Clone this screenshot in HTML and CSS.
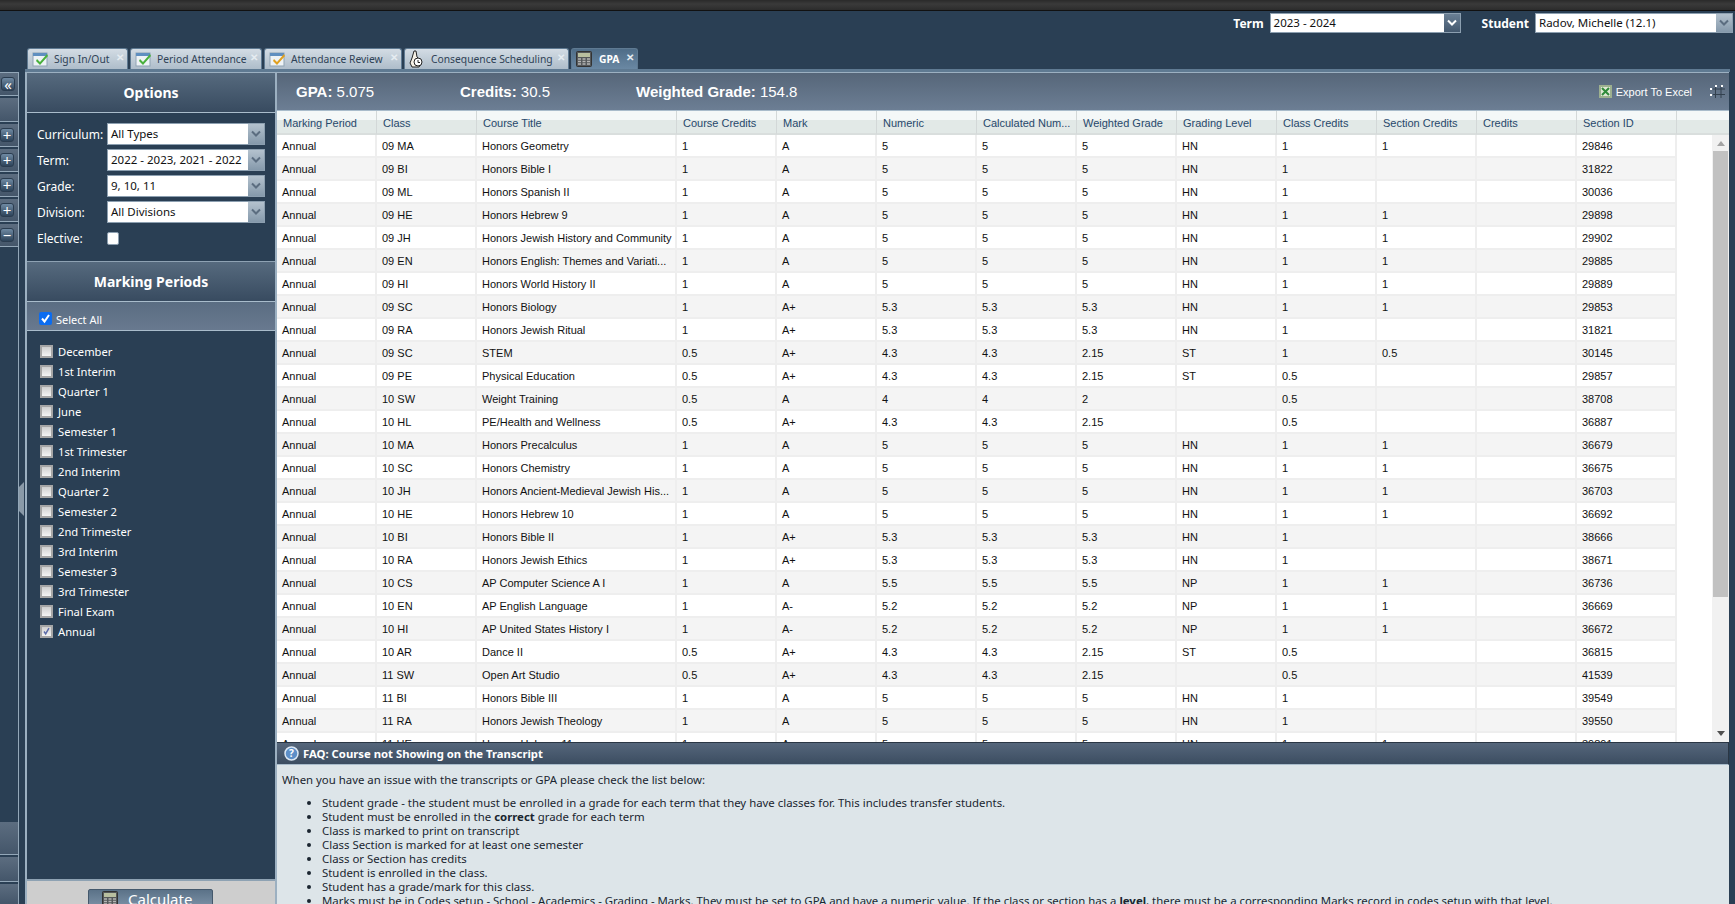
FILE: index.html
```html
<!DOCTYPE html>
<html>
<head>
  <title>GPA</title>
  <link rel="stylesheet" href="styles.css">
</head>
<body>
  <svg class="defs" width="0" height="0">
    <symbol id="cal-green" viewBox="0 0 18 16">
      <rect x="1" y="2" width="14" height="13" fill="#eef3f6" stroke="#8fa3b3"/>
      <rect x="1" y="2" width="14" height="3" fill="#5f8fc0"/>
      <path d="M5 8l3 3 7-8 1 2-8 9-4-4z" fill="#49b03c"/>
    </symbol>
    <symbol id="cal-orange" viewBox="0 0 18 16">
      <rect x="1" y="2" width="14" height="13" fill="#eef3f6" stroke="#8fa3b3"/>
      <rect x="1" y="2" width="14" height="3" fill="#5f8fc0"/>
      <path d="M5 8l3 3 7-8 1 2-8 9-4-4z" fill="#e0a020"/>
    </symbol>
    <symbol id="hand" viewBox="0 0 14 18">
      <path d="M5 1l2 0 1 6 3 3 1 4-2 3-7 0-2-4 2-5z" fill="#f6f1e6" stroke="#222"/>
      <circle cx="9" cy="12" r="4" fill="#fff" stroke="#222"/>
      <path d="M9 10v2.500h2" fill="none" stroke="#222"/>
    </symbol>
    <symbol id="calc" viewBox="0 0 16 16">
      <rect x="0.500" y="0.500" width="15" height="15" rx="1" fill="#55585a" stroke="#333"/>
      <rect x="2" y="2" width="12" height="4" fill="#b9bf9f"/>
      <path d="M2 8h3M6.500 8h3M11 8h3M2 10.500h3M6.500 10.500h3M11 10.500h3M2 13h3M6.500 13h3M11 13h3" stroke="#b5b5b5" stroke-width="1.500"/>
    </symbol>
    <symbol id="excel" viewBox="0 0 13 13">
      <rect width="13" height="13" fill="#9db08f"/>
      <rect x="2" y="2" width="9" height="9" fill="#dfe8d4"/>
      <path d="M3 3l7 7M10 3l-7 7" stroke="#2f8a3a" stroke-width="2"/>
    </symbol>
    <symbol id="chev" viewBox="0 0 10 8">
      <path d="M1 1.500l4 4 4-4" fill="none" stroke="currentColor" stroke-width="2"/>
    </symbol>
  </svg>

  <div class="topbar"></div>

  <div class="selectors">
    <label class="sel-label">Term</label>
    <div class="combo combo-term">
      <span class="combo-text">2023 - 2024</span>
      <span class="combo-btn dark"><svg class="chev"><use href="#chev"/></svg></span>
    </div>
    <label class="sel-label student-label">Student</label>
    <div class="combo combo-student">
      <span class="combo-text">Radov, Michelle (12.1)</span>
      <span class="combo-btn"><svg class="chev"><use href="#chev"/></svg></span>
    </div>
  </div>

  <div class="tabs">
    <div class="tab w-signin"><svg class="tab-icon"><use href="#cal-green"/></svg><span class="tab-name">Sign In/Out</span><span class="tab-x">&#10005;</span></div>
    <div class="tab w-period"><svg class="tab-icon"><use href="#cal-green"/></svg><span class="tab-name">Period Attendance</span><span class="tab-x">&#10005;</span></div>
    <div class="tab w-review"><svg class="tab-icon"><use href="#cal-orange"/></svg><span class="tab-name">Attendance Review</span><span class="tab-x">&#10005;</span></div>
    <div class="tab w-conseq"><svg class="tab-icon hand"><use href="#hand"/></svg><span class="tab-name">Consequence Scheduling</span><span class="tab-x">&#10005;</span></div>
    <div class="tab w-gpa active"><svg class="tab-icon calc"><use href="#calc"/></svg><span class="tab-name">GPA</span><span class="tab-x">&#10005;</span></div>
  </div>
  <div class="tab-strip"></div>

  <div class="workspace">
    <div class="rail">
      <div class="rail-seg"><span class="rail-btn double">&laquo;</span></div>
      <div class="rail-seg tall"></div>
      <div class="rail-seg"><span class="rail-btn">+</span></div>
      <div class="rail-seg"><span class="rail-btn">+</span></div>
      <div class="rail-seg"><span class="rail-btn">+</span></div>
      <div class="rail-seg"><span class="rail-btn">+</span></div>
      <div class="rail-seg"><span class="rail-btn">&minus;</span></div>
      <div class="rail-seg big push"></div>
      <div class="rail-seg mid"></div>
      <div class="rail-seg last"></div>
    </div>
    <div class="splitter"><div class="split-handle"></div></div>

    <div class="options">
      <div class="pane-title">Options</div>
      <div class="filter-form">
        <div class="filter-row">
          <span class="filter-label">Curriculum:</span>
          <div class="combo combo-filter"><span class="combo-text">All Types</span><span class="combo-btn"><svg class="chev"><use href="#chev"/></svg></span></div>
        </div>
        <div class="filter-row">
          <span class="filter-label">Term:</span>
          <div class="combo combo-filter"><span class="combo-text">2022 - 2023, 2021 - 2022</span><span class="combo-btn"><svg class="chev"><use href="#chev"/></svg></span></div>
        </div>
        <div class="filter-row">
          <span class="filter-label">Grade:</span>
          <div class="combo combo-filter"><span class="combo-text">9, 10, 11</span><span class="combo-btn"><svg class="chev"><use href="#chev"/></svg></span></div>
        </div>
        <div class="filter-row">
          <span class="filter-label">Division:</span>
          <div class="combo combo-filter"><span class="combo-text">All Divisions</span><span class="combo-btn"><svg class="chev"><use href="#chev"/></svg></span></div>
        </div>
        <div class="filter-row">
          <span class="filter-label">Elective:</span>
          <span class="elective-box"></span>
        </div>
      </div>

      <div class="pane-title periods-title">Marking Periods</div>
      <div class="select-all">
        <span class="blue-check"><svg width="13" height="13" viewBox="0 0 13 13"><path d="M3 6.500l2.500 3L10 3" fill="none" stroke="#fff" stroke-width="2"/></svg></span>
        <span>Select All</span>
      </div>
      <div class="period-list">
        <div class="period"><span class="period-box"></span>December</div>
        <div class="period"><span class="period-box"></span>1st Interim</div>
        <div class="period"><span class="period-box"></span>Quarter 1</div>
        <div class="period"><span class="period-box"></span>June</div>
        <div class="period"><span class="period-box"></span>Semester 1</div>
        <div class="period"><span class="period-box"></span>1st Trimester</div>
        <div class="period"><span class="period-box"></span>2nd Interim</div>
        <div class="period"><span class="period-box"></span>Quarter 2</div>
        <div class="period"><span class="period-box"></span>Semester 2</div>
        <div class="period"><span class="period-box"></span>2nd Trimester</div>
        <div class="period"><span class="period-box"></span>3rd Interim</div>
        <div class="period"><span class="period-box"></span>Semester 3</div>
        <div class="period"><span class="period-box"></span>3rd Trimester</div>
        <div class="period"><span class="period-box"></span>Final Exam</div>
        <div class="period"><span class="period-box"><svg width="11" height="11" viewBox="0 0 11 11"><path d="M2.500 5.500l2 3L8.500 1.500" fill="none" stroke="#5a6aa8" stroke-width="1.800"/></svg></span>Annual</div>
      </div>
      <div class="calc-bar">
        <div class="calc-btn"><svg class="calc-icon"><use href="#calc"/></svg>Calculate</div>
      </div>
    </div>

    <div class="results">
      <div class="gpa-head">
        <span class="stat stat-gpa"><b>GPA:</b> 5.075</span>
        <span class="stat stat-credits"><b>Credits:</b> 30.5</span>
        <span class="stat"><b>Weighted Grade:</b> 154.8</span>
        <span class="export"><svg class="excel"><use href="#excel"/></svg>Export To Excel</span>
        <svg class="fullscreen" width="17" height="14" viewBox="0 0 17 14">
          <path d="M4 4h12M4 9.500h12M6.500 1v12M12 1v12" stroke="#33414f" fill="none"/>
          <path d="M1 3h2v2H1zM1 9h2v2H1zM6 0h2v2H6zM12 0h2v2h-2z" fill="#fff"/>
        </svg>
      </div>
      <div class="grid">
        <table class="grid-table">
          <colgroup>
            <col class="c"><col class="c"><col class="c-title"><col class="c"><col class="c"><col class="c"><col class="c"><col class="c"><col class="c"><col class="c"><col class="c"><col class="c"><col class="c"><col>
          </colgroup>
          <thead>
            <tr><th>Marking Period</th><th>Class</th><th>Course Title</th><th>Course Credits</th><th>Mark</th><th>Numeric</th><th>Calculated Num...</th><th>Weighted Grade</th><th>Grading Level</th><th>Class Credits</th><th>Section Credits</th><th>Credits</th><th>Section ID</th><th></th></tr>
          </thead>
          <tbody>
            <tr><td>Annual</td><td>09 MA</td><td>Honors Geometry</td><td>1</td><td>A</td><td>5</td><td>5</td><td>5</td><td>HN</td><td>1</td><td>1</td><td></td><td>29846</td><td></td></tr>
            <tr><td>Annual</td><td>09 BI</td><td>Honors Bible I</td><td>1</td><td>A</td><td>5</td><td>5</td><td>5</td><td>HN</td><td>1</td><td></td><td></td><td>31822</td><td></td></tr>
            <tr><td>Annual</td><td>09 ML</td><td>Honors Spanish II</td><td>1</td><td>A</td><td>5</td><td>5</td><td>5</td><td>HN</td><td>1</td><td></td><td></td><td>30036</td><td></td></tr>
            <tr><td>Annual</td><td>09 HE</td><td>Honors Hebrew 9</td><td>1</td><td>A</td><td>5</td><td>5</td><td>5</td><td>HN</td><td>1</td><td>1</td><td></td><td>29898</td><td></td></tr>
            <tr><td>Annual</td><td>09 JH</td><td>Honors Jewish History and Community</td><td>1</td><td>A</td><td>5</td><td>5</td><td>5</td><td>HN</td><td>1</td><td>1</td><td></td><td>29902</td><td></td></tr>
            <tr><td>Annual</td><td>09 EN</td><td>Honors English: Themes and Variati...</td><td>1</td><td>A</td><td>5</td><td>5</td><td>5</td><td>HN</td><td>1</td><td>1</td><td></td><td>29885</td><td></td></tr>
            <tr><td>Annual</td><td>09 HI</td><td>Honors World History II</td><td>1</td><td>A</td><td>5</td><td>5</td><td>5</td><td>HN</td><td>1</td><td>1</td><td></td><td>29889</td><td></td></tr>
            <tr><td>Annual</td><td>09 SC</td><td>Honors Biology</td><td>1</td><td>A+</td><td>5.3</td><td>5.3</td><td>5.3</td><td>HN</td><td>1</td><td>1</td><td></td><td>29853</td><td></td></tr>
            <tr><td>Annual</td><td>09 RA</td><td>Honors Jewish Ritual</td><td>1</td><td>A+</td><td>5.3</td><td>5.3</td><td>5.3</td><td>HN</td><td>1</td><td></td><td></td><td>31821</td><td></td></tr>
            <tr><td>Annual</td><td>09 SC</td><td>STEM</td><td>0.5</td><td>A+</td><td>4.3</td><td>4.3</td><td>2.15</td><td>ST</td><td>1</td><td>0.5</td><td></td><td>30145</td><td></td></tr>
            <tr><td>Annual</td><td>09 PE</td><td>Physical Education</td><td>0.5</td><td>A+</td><td>4.3</td><td>4.3</td><td>2.15</td><td>ST</td><td>0.5</td><td></td><td></td><td>29857</td><td></td></tr>
            <tr><td>Annual</td><td>10 SW</td><td>Weight Training</td><td>0.5</td><td>A</td><td>4</td><td>4</td><td>2</td><td></td><td>0.5</td><td></td><td></td><td>38708</td><td></td></tr>
            <tr><td>Annual</td><td>10 HL</td><td>PE/Health and Wellness</td><td>0.5</td><td>A+</td><td>4.3</td><td>4.3</td><td>2.15</td><td></td><td>0.5</td><td></td><td></td><td>36887</td><td></td></tr>
            <tr><td>Annual</td><td>10 MA</td><td>Honors Precalculus</td><td>1</td><td>A</td><td>5</td><td>5</td><td>5</td><td>HN</td><td>1</td><td>1</td><td></td><td>36679</td><td></td></tr>
            <tr><td>Annual</td><td>10 SC</td><td>Honors Chemistry</td><td>1</td><td>A</td><td>5</td><td>5</td><td>5</td><td>HN</td><td>1</td><td>1</td><td></td><td>36675</td><td></td></tr>
            <tr><td>Annual</td><td>10 JH</td><td>Honors Ancient-Medieval Jewish His...</td><td>1</td><td>A</td><td>5</td><td>5</td><td>5</td><td>HN</td><td>1</td><td>1</td><td></td><td>36703</td><td></td></tr>
            <tr><td>Annual</td><td>10 HE</td><td>Honors Hebrew 10</td><td>1</td><td>A</td><td>5</td><td>5</td><td>5</td><td>HN</td><td>1</td><td>1</td><td></td><td>36692</td><td></td></tr>
            <tr><td>Annual</td><td>10 BI</td><td>Honors Bible II</td><td>1</td><td>A+</td><td>5.3</td><td>5.3</td><td>5.3</td><td>HN</td><td>1</td><td></td><td></td><td>38666</td><td></td></tr>
            <tr><td>Annual</td><td>10 RA</td><td>Honors Jewish Ethics</td><td>1</td><td>A+</td><td>5.3</td><td>5.3</td><td>5.3</td><td>HN</td><td>1</td><td></td><td></td><td>38671</td><td></td></tr>
            <tr><td>Annual</td><td>10 CS</td><td>AP Computer Science A I</td><td>1</td><td>A</td><td>5.5</td><td>5.5</td><td>5.5</td><td>NP</td><td>1</td><td>1</td><td></td><td>36736</td><td></td></tr>
            <tr><td>Annual</td><td>10 EN</td><td>AP English Language</td><td>1</td><td>A-</td><td>5.2</td><td>5.2</td><td>5.2</td><td>NP</td><td>1</td><td>1</td><td></td><td>36669</td><td></td></tr>
            <tr><td>Annual</td><td>10 HI</td><td>AP United States History I</td><td>1</td><td>A-</td><td>5.2</td><td>5.2</td><td>5.2</td><td>NP</td><td>1</td><td>1</td><td></td><td>36672</td><td></td></tr>
            <tr><td>Annual</td><td>10 AR</td><td>Dance II</td><td>0.5</td><td>A+</td><td>4.3</td><td>4.3</td><td>2.15</td><td>ST</td><td>0.5</td><td></td><td></td><td>36815</td><td></td></tr>
            <tr><td>Annual</td><td>11 SW</td><td>Open Art Studio</td><td>0.5</td><td>A+</td><td>4.3</td><td>4.3</td><td>2.15</td><td></td><td>0.5</td><td></td><td></td><td>41539</td><td></td></tr>
            <tr><td>Annual</td><td>11 BI</td><td>Honors Bible III</td><td>1</td><td>A</td><td>5</td><td>5</td><td>5</td><td>HN</td><td>1</td><td></td><td></td><td>39549</td><td></td></tr>
            <tr><td>Annual</td><td>11 RA</td><td>Honors Jewish Theology</td><td>1</td><td>A</td><td>5</td><td>5</td><td>5</td><td>HN</td><td>1</td><td></td><td></td><td>39550</td><td></td></tr>
            <tr><td>Annual</td><td>11 HE</td><td>Honors Hebrew 11</td><td>1</td><td>A</td><td>5</td><td>5</td><td>5</td><td>HN</td><td>1</td><td>1</td><td></td><td>39891</td><td></td></tr>
          </tbody>
        </table>
        <div class="scrollbar">
          <span class="arrow-up"></span>
          <span class="thumb"></span>
          <span class="arrow-down"></span>
        </div>
      </div>
      <div class="faq">
        <div class="faq-head">
          <svg class="faq-icon" width="15" height="15" viewBox="0 0 15 15"><circle cx="7.500" cy="7.500" r="6.500" fill="#5d8fc8" stroke="#dce8f4" stroke-width="1.500"/><text x="7.500" y="11" class="faq-q">?</text></svg>
          FAQ: Course not Showing on the Transcript
        </div>
        <div class="faq-body">
          <p class="faq-intro">When you have an issue with the transcripts or GPA please check the list below:</p>
          <ul class="faq-list">
            <li>Student grade - the student must be enrolled in a grade for each term that they have classes for. This includes transfer students.</li>
            <li>Student must be enrolled in the <b>correct</b> grade for each term</li>
            <li>Class is marked to print on transcript</li>
            <li>Class Section is marked for at least one semester</li>
            <li>Class or Section has credits</li>
            <li>Student is enrolled in the class.</li>
            <li>Student has a grade/mark for this class.</li>
            <li>Marks must be in Codes setup - School - Academics - Grading - Marks. They must be set to GPA and have a numeric value. If the class or section has a <b>level</b>, there must be a corresponding Marks record in codes setup with that level.</li>
          </ul>
        </div>
      </div>
    </div>
  </div>
</body>
</html>
```
FILE: styles.css
```css
html, body {
  margin: 0;
  height: 904px;
  overflow: hidden;
}
body {
  background-color: #2a3f54;
  font-family: "Noto Sans", Tahoma, sans-serif;
  font-size: 12px;
  color: #fff;
}
.defs {
  position: absolute;
}
.topbar {
  height: 11px;
  background: linear-gradient(#2a2a2a, #3a3a3a 40%, #2c2c2c);
  border-bottom: 1px solid #111;
  box-sizing: border-box;
}

/* term / student selectors */
.selectors {
  display: flex;
  justify-content: flex-end;
  align-items: center;
  height: 20px;
  margin-top: 2px;
  padding-right: 2px;
}
.sel-label {
  font-size: 12px;
  font-weight: bold;
  margin-right: 6px;
}
.student-label {
  margin-left: 21px;
}
.combo {
  display: flex;
  height: 20px;
  background: #fff;
  color: #111;
  border: 1px solid #8c9fb0;
  box-sizing: border-box;
  font-size: 11.500px;
}
.combo-term {
  width: 191px;
}
.combo-student {
  width: 198px;
}
.combo-filter {
  width: 158px;
  height: 22px;
}
.combo-text {
  flex: 1;
  padding-left: 3px;
  line-height: 18px;
  white-space: nowrap;
  overflow: hidden;
}
.combo-filter .combo-text {
  line-height: 20px;
}
.combo-btn {
  display: flex;
  align-items: center;
  justify-content: center;
  width: 16px;
  flex-shrink: 0;
  color: #5b6d80;
  background: linear-gradient(#b4c2ce, #8599ab);
}
.combo-btn.dark {
  color: #fff;
  background: linear-gradient(#6a7f94, #43586e);
}
.chev {
  width: 10px;
  height: 8px;
}

/* tabs */
.tabs {
  display: flex;
  gap: 2px;
  height: 21px;
  margin-top: 15px;
  padding-left: 27px;
}
.tab {
  display: flex;
  align-items: center;
  position: relative;
  box-sizing: border-box;
  padding-left: 4px;
  font-size: 10.300px;
  color: #2f4256;
  background: linear-gradient(#d3dce4, #aebdca);
  border: 1px solid #5f7a92;
  border-bottom: none;
  border-radius: 3px 3px 0 0;
}
.w-signin { width: 101px; }
.w-period { width: 132px; }
.w-review { width: 138px; }
.w-conseq { width: 165px; }
.w-gpa { width: 67px; }
.tab.active {
  color: #fff;
  font-weight: bold;
  background: linear-gradient(#4f6d88, #6a88a3);
}
.tab-icon {
  width: 18px;
  height: 16px;
  margin-right: 4px;
  flex-shrink: 0;
}
.tab-icon.hand {
  width: 14px;
  height: 18px;
  margin-right: 8px;
}
.tab-icon.calc {
  width: 16px;
  height: 16px;
  margin-right: 7px;
}
.tab-name {
  white-space: nowrap;
}
.tab-x {
  position: absolute;
  right: 3px;
  top: 1px;
  font-size: 10px;
  font-weight: bold;
  color: #e6ecf1;
}
.tab-strip {
  height: 3px;
  margin-left: 25px;
  margin-right: 5px;
  background: #5f7a92;
}

/* main area */
.workspace {
  display: flex;
  height: 832px;
}
.rail {
  display: flex;
  flex-direction: column;
  width: 19px;
  flex-shrink: 0;
  box-sizing: border-box;
  border-right: 1px solid #93a7b8;
  border-top: 1px solid #93a7b8;
}
.rail-seg {
  display: flex;
  align-items: center;
  height: 22px;
  margin-bottom: 2px;
  border-bottom: 1px solid #93a7b8;
  background: linear-gradient(#5c6d80, #44566a);
}
.rail-seg.tall {
  height: 23px;
}
.rail-seg.push {
  margin-top: auto;
}
.rail-seg.big {
  height: 32px;
}
.rail-seg.mid {
  height: 24px;
}
.rail-seg.last {
  height: 20px;
  margin-bottom: 0;
  border-bottom: none;
}
.rail-btn {
  display: block;
  width: 14px;
  height: 14px;
  line-height: 12px;
  text-align: center;
  font-size: 15px;
  color: #fff;
  background: linear-gradient(#6f8aa3, #2d4359);
  border: 1px solid #2b3d50;
  border-radius: 3px;
  box-sizing: border-box;
}
.rail-btn.double {
  margin-left: 1px;
}
.splitter {
  width: 6px;
  flex-shrink: 0;
}
.split-handle {
  width: 5px;
  height: 34px;
  margin-top: 410px;
  background: #8a9aa8;
  clip-path: polygon(100% 0, 100% 100%, 0 85%, 0 15%);
}
.options {
  display: flex;
  flex-direction: column;
  width: 252px;
  flex-shrink: 0;
  box-sizing: border-box;
  border-left: 2px solid #9cb0c1;
  border-right: 2px solid #9cb0c1;
  border-top: 1px solid #9cb0c1;
}
.pane-title {
  height: 39px;
  line-height: 39px;
  text-align: center;
  font-size: 14px;
  font-weight: bold;
  background: linear-gradient(#566a7e, #384b60);
  border-bottom: 1px solid #a9bccb;
  flex-shrink: 0;
}
.filter-form {
  display: flex;
  flex-direction: column;
  gap: 4px;
  padding: 10px 0 0 10px;
  height: 148px;
  box-sizing: border-box;
  flex-shrink: 0;
}
.filter-row {
  display: flex;
  align-items: center;
  height: 22px;
}
.filter-label {
  width: 70px;
  font-size: 12px;
}
.elective-box {
  width: 12px;
  height: 13px;
  background: #fff;
  border: 1px solid #8c9fb0;
  border-radius: 2px;
  box-sizing: border-box;
}
.periods-title {
  border-top: 1px solid #8ea2b3;
}
.select-all {
  display: flex;
  align-items: center;
  gap: 4px;
  height: 28px;
  box-sizing: content-box;
  padding-left: 12px;
  font-size: 11px;
  background: linear-gradient(#5a6d82, #68798f);
  border-bottom: 1px solid #a9bccb;
  flex-shrink: 0;
}
.select-all span:last-child {
  padding-top: 6px;
}
.blue-check {
  display: block;
  width: 13px;
  height: 13px;
  background: #0b6cf0;
  border-radius: 2px;
  margin-top: 4px;
}
.period-list {
  flex: 1;
  padding: 10px 0 0 13px;
}
.period {
  display: flex;
  align-items: center;
  height: 20px;
  font-size: 11.200px;
}
.period-box {
  display: flex;
  align-items: center;
  justify-content: center;
  width: 13px;
  height: 13px;
  margin-right: 5px;
  box-sizing: border-box;
  border: 2px solid #a6a6a6;
  background: linear-gradient(#cfcfcf, #f4f4f4);
}
.calc-bar {
  height: 25px;
  box-sizing: border-box;
  padding-top: 8px;
  background: #cecece;
  border-top: 2px solid #8ea2b3;
  overflow: hidden;
  flex-shrink: 0;
}
.calc-btn {
  display: flex;
  align-items: center;
  width: 125px;
  height: 20px;
  margin-left: 61px;
  box-sizing: border-box;
  padding-left: 13px;
  font-size: 15px;
  background: linear-gradient(#5b7288, #7d93a8);
  border: 1px solid #44586c;
  border-radius: 2px;
}
.calc-icon {
  width: 16px;
  height: 16px;
  margin-right: 10px;
}

/* right side */
.results {
  display: flex;
  flex-direction: column;
  flex: 1;
  min-width: 0;
  margin-right: 6px;
  border-top: 1px solid #9cb0c1;
}
.gpa-head {
  display: flex;
  align-items: center;
  height: 38px;
  padding-left: 19px;
  padding-right: 3px;
  flex-shrink: 0;
  font-size: 15px;
  font-family: "Liberation Sans", Arial, sans-serif;
  background: linear-gradient(#566679, #6c7e94);
  border-bottom: 1px solid #a9bccb;
  box-sizing: border-box;
}
.stat {
  white-space: nowrap;
}
.stat-gpa {
  width: 164px;
}
.stat-credits {
  width: 176px;
}
.export {
  display: flex;
  align-items: center;
  margin-left: auto;
  font-size: 11px;
}
.excel {
  width: 13px;
  height: 13px;
  margin-right: 4px;
}
.fullscreen {
  margin-left: 17px;
}
.grid {
  position: relative;
  flex: 1;
  min-height: 0;
  background: #fff;
  overflow: hidden;
}
.grid-table {
  table-layout: fixed;
  width: 100%;
  border-collapse: separate;
  border-spacing: 0;
  font-family: "Liberation Sans", Arial, sans-serif;
  font-size: 11px;
  color: #111;
}
.c {
  width: 100px;
}
.c-title {
  width: 200px;
}
.grid-table th {
  height: 24px;
  padding: 2px 0 0 6px;
  box-sizing: border-box;
  text-align: left;
  font-weight: normal;
  color: #27486b;
  background: linear-gradient(#f4f8f8 40%, #e2e9e7 40%);
  border-right: 1px solid #d3d8d8;
  border-bottom: 2px solid #d9dedd;
}
.grid-table th:last-child {
  border-right: none;
}
.grid-table td {
  height: 23px;
  padding: 0 0 0 5px;
  box-sizing: border-box;
  white-space: nowrap;
  overflow: hidden;
  border-right: 2px solid #eee;
  border-bottom: 2px solid #eee;
}
.grid-table tr:nth-child(even) td {
  background: #f4f4f4;
}
.grid-table td:last-child,
.grid-table tr:nth-child(even) td:last-child {
  background: transparent;
  border: none;
}
.scrollbar {
  position: absolute;
  top: 24px;
  right: 0;
  bottom: 0;
  width: 17px;
  display: flex;
  flex-direction: column;
  align-items: center;
  background: #f1f1f1;
}
.arrow-up {
  margin-top: 6px;
  border: 4px solid transparent;
  border-top: none;
  border-bottom: 5px solid #a3a3a3;
}
.thumb {
  width: 15px;
  height: 446px;
  margin-top: 5px;
  background: #c1c1c1;
}
.arrow-down {
  margin-top: auto;
  margin-bottom: 6px;
  border: 4px solid transparent;
  border-bottom: none;
  border-top: 5px solid #505050;
}
.faq {
  flex-shrink: 0;
  height: 162px;
  background: #dde5e9;
  color: #1a2530;
  font-size: 11.400px;
  overflow: hidden;
}
.faq-head {
  display: flex;
  align-items: center;
  height: 23px;
  padding-left: 7px;
  box-sizing: border-box;
  font-size: 11.300px;
  font-weight: bold;
  color: #fff;
  background: linear-gradient(#55667b, #3c4d61);
  border-top: 1px solid #2a3644;
  border-right: 1px solid #2a3644;
  border-bottom: 1px solid #a9bccb;
}
.faq-icon {
  margin-right: 4px;
}
.faq-q {
  font-size: 10px;
  font-weight: bold;
  fill: #fff;
  text-anchor: middle;
}
.faq-body {
  padding: 6px 5px 0;
}
.faq-intro {
  margin: 0 0 8px;
  height: 17px;
  line-height: 17px;
}
.faq-list {
  margin: 0;
  padding-left: 40px;
  line-height: 14px;
}
```
